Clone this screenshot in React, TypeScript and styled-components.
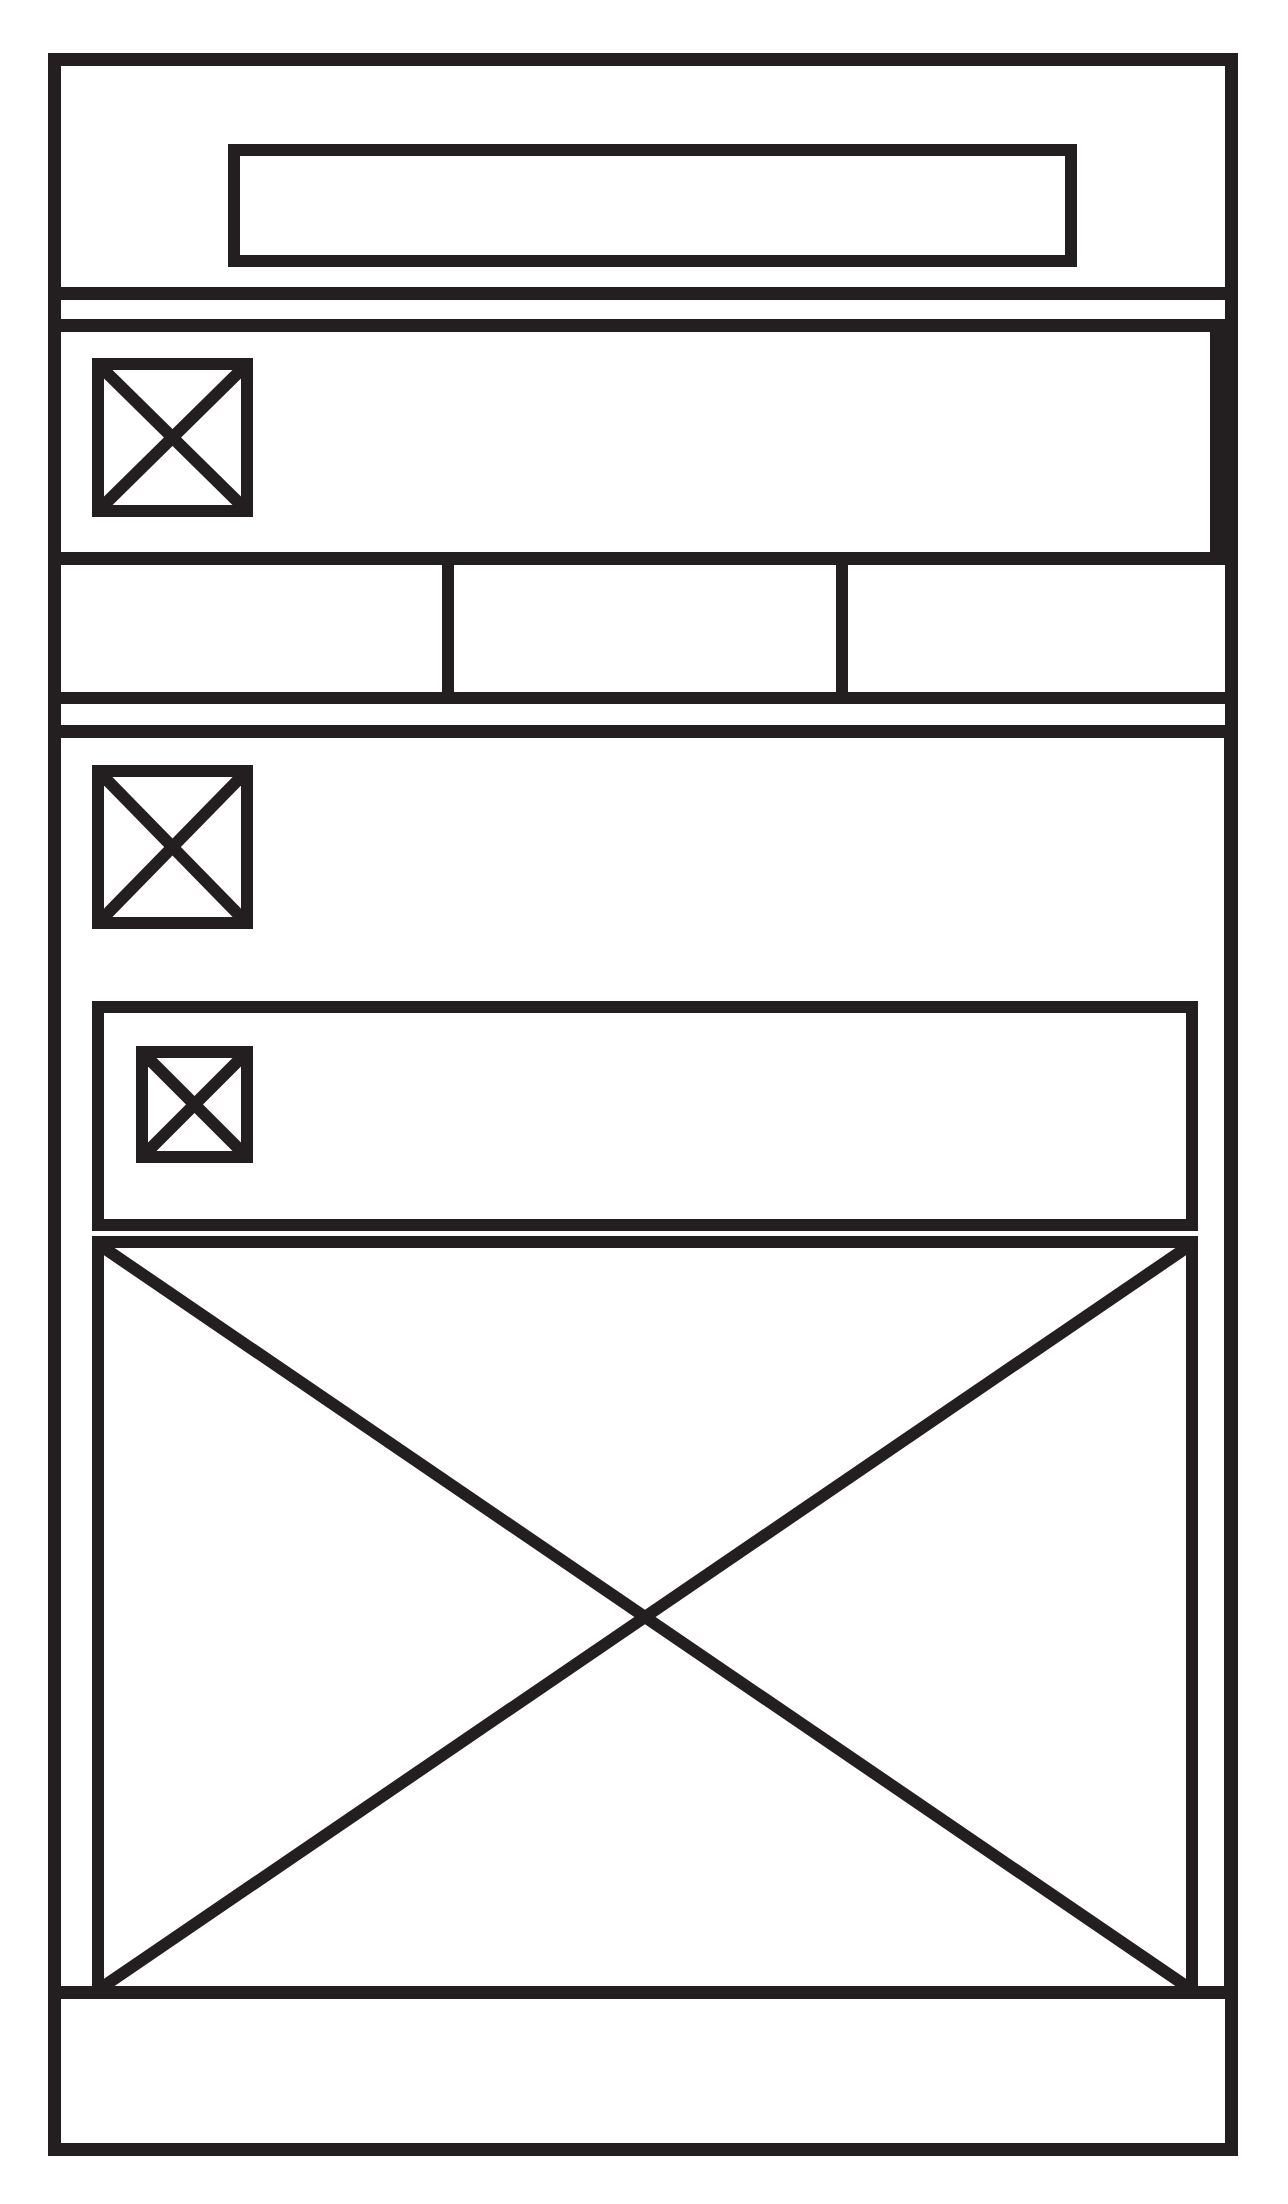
import styled, { createGlobalStyle } from "styled-components";

const INK = "#231f20";

const GlobalStyle = createGlobalStyle`
  html, body {
    margin: 0;
    padding: 0;
    background: #ffffff;
    font-family: "Liberation Sans", Arial, sans-serif;
  }
  * {
    box-sizing: border-box;
  }
`;

const Frame = styled.div`
  margin: 53px 0 0 48px;
  width: 1190px;
  border: 13px solid ${INK};
  display: flex;
  flex-direction: column;
`;

const Header = styled.header`
  height: 234px;
  padding: 78px 0 0 167px;
  border-bottom: 13px solid ${INK};
`;

const SearchBox = styled.div`
  width: 849px;
  height: 123px;
  border: 12px solid ${INK};
`;

const Gap = styled.div<{ $h: number }>`
  height: ${(p) => p.$h}px;
`;

const Hero = styled.section`
  height: 246px;
  padding: 26px 0 0 31px;
  border-top: 13px solid ${INK};
  border-bottom: 13px solid ${INK};
  border-right: 15px solid ${INK};
`;

const Columns = styled.nav`
  display: grid;
  grid-template-columns: 381px 394px 1fr;
  height: 139px;
  border-bottom: 12px solid ${INK};
`;

const Column = styled.div<{ $divided?: boolean }>`
  border-left: ${(p) => (p.$divided ? `12px solid ${INK}` : "none")};
`;

const Main = styled.main`
  display: flex;
  flex-direction: column;
  align-items: flex-start;
  padding: 27px 0 0 31px;
  border-top: 13px solid ${INK};
  border-bottom: 13px solid ${INK};
  border-right: 1px solid ${INK};
`;

const Card = styled.div`
  margin-top: 72px;
  width: 1106px;
  height: 230px;
  padding: 33px 0 0 32px;
  border: 12px solid ${INK};
`;

const Footer = styled.footer`
  height: 144px;
`;

const ImageBox = styled.div<{ $w: number; $h: number; $open?: boolean }>`
  width: ${(p) => p.$w}px;
  height: ${(p) => p.$h}px;
  border: 12px solid ${INK};
  border-bottom-width: ${(p) => (p.$open ? 0 : 12)}px;
  overflow: hidden;
  flex-shrink: 0;

  svg {
    display: block;
    width: 100%;
    height: 100%;
  }
`;

const BigImage = styled(ImageBox)`
  margin-top: 5px;
`;

function Cross() {
  return (
    <svg viewBox="0 0 100 100" preserveAspectRatio="none">
      <line x1="0" y1="0" x2="100" y2="100" stroke={INK} strokeWidth={12} vectorEffect="non-scaling-stroke" />
      <line x1="100" y1="0" x2="0" y2="100" stroke={INK} strokeWidth={12} vectorEffect="non-scaling-stroke" />
    </svg>
  );
}

export default function App() {
  return (
    <>
      <GlobalStyle />
      <Frame>
        <Header>
          <SearchBox />
        </Header>
        <Gap $h={19} />
        <Hero>
          <ImageBox $w={161} $h={159}>
            <Cross />
          </ImageBox>
        </Hero>
        <Columns>
          <Column />
          <Column $divided />
          <Column $divided />
        </Columns>
        <Gap $h={21} />
        <Main>
          <ImageBox $w={161} $h={164}>
            <Cross />
          </ImageBox>
          <Card>
            <ImageBox $w={117} $h={117}>
              <Cross />
            </ImageBox>
          </Card>
          <BigImage $w={1106} $h={750} $open>
            <Cross />
          </BigImage>
        </Main>
        <Footer />
      </Frame>
    </>
  );
}
